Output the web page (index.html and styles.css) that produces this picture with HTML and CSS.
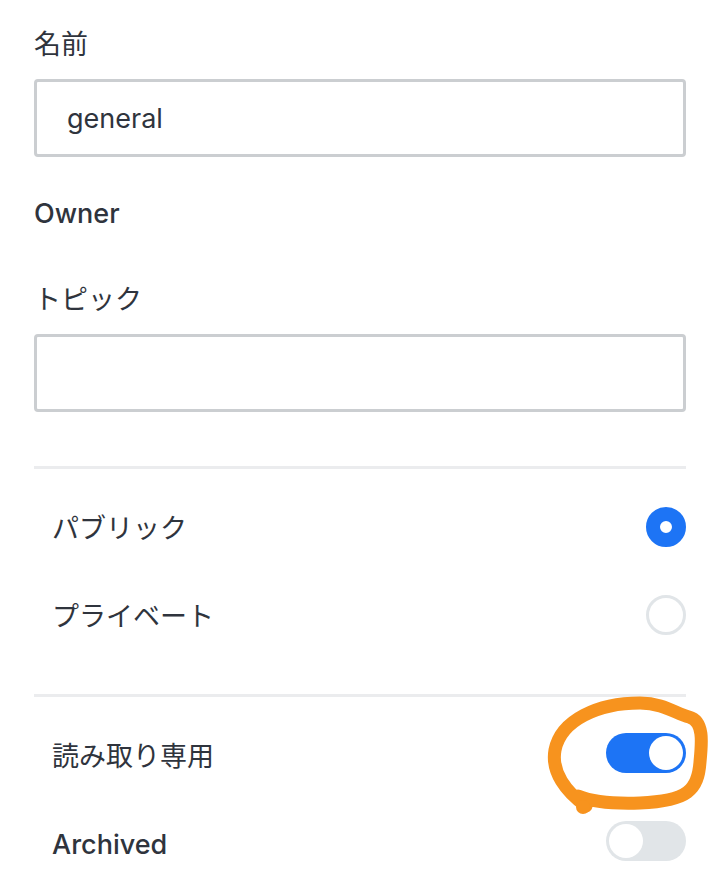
FILE: index.html
```html
<!DOCTYPE html>
<html lang="ja">
<head>
  <meta charset="UTF-8">
  <title>チャンネル設定</title>
  <link rel="stylesheet" href="styles.css">
</head>
<body>
  <main class="form">
    <label class="label" for="name">名前</label>
    <input class="input" id="name" type="text" value="general">

    <div class="label owner">Owner</div>

    <label class="label topic" for="topic">トピック</label>
    <input class="input" id="topic" type="text" value="">

    <div class="divider first"></div>

    <div class="row">
      <span class="row-text">パブリック</span>
      <span class="radio checked"></span>
    </div>
    <div class="row">
      <span class="row-text">プライベート</span>
      <span class="radio"></span>
    </div>

    <div class="divider second"></div>

    <div class="row">
      <span class="row-text">読み取り専用</span>
      <span class="switch on"><span class="knob"></span></span>
    </div>
    <div class="row">
      <span class="row-text latin">Archived</span>
      <span class="switch"><span class="knob"></span></span>
    </div>
  </main>

  <!-- hand-drawn highlight over the read-only switch -->
  <svg class="scribble" width="720" height="890" viewBox="0 0 720 890">
    <path d="M586 806 C566 792 551 772 555 750 C561 720 598 703 640 703 C664 703 676 714 689 717 C704 721 702 742 700 762 C698 790 688 801 640 803 C612 804 590 801 578 796"
          fill="none" stroke="#f7931e" stroke-width="13" stroke-linecap="round" stroke-linejoin="round"/>
    <circle cx="583" cy="807" r="7" fill="#f7931e"/>
  </svg>
</body>
</html>
```

FILE: styles.css
```css
body {
  margin: 0;
  background: #fff;
  font-family: Inter, "Noto Sans CJK JP", sans-serif;
  color: #2f343d;
}
.form {
  padding: 27px 34px 0;
  display: flex;
  flex-direction: column;
}
.label {
  display: block;
  font-size: 27px;
  line-height: 36px;
  margin-bottom: 16px;
}
.owner {
  font-size: 27px;
  font-weight: 500;
  margin-top: 39px;
  margin-bottom: 0;
}
.topic {
  margin-top: 50px;
}
.input {
  box-sizing: border-box;
  width: 100%;
  height: 78px;
  margin: 0;
  padding: 0 30px;
  border: 3px solid #cbced1;
  border-radius: 4px;
  font-family: Inter, "Noto Sans CJK JP", sans-serif;
  font-size: 27px;
  color: #2f343d;
  outline: none;
}
.divider {
  height: 3px;
  background: #ebecee;
}
.divider.first {
  margin-top: 54px;
  margin-bottom: 14px;
}
.divider.second {
  margin-top: 35px;
  margin-bottom: 14px;
}
.row {
  height: 88px;
  display: flex;
  align-items: center;
  justify-content: space-between;
  padding-left: 18px;
}
.row-text {
  font-size: 27px;
  line-height: 36px;
  padding-top: 4px;
}
.row-text.latin {
  font-size: 27px;
  font-weight: 500;
}
.radio {
  box-sizing: border-box;
  width: 40px;
  height: 40px;
  border-radius: 50%;
  border: 3px solid #e1e5e8;
  background: #fff;
}
.radio.checked {
  border: 14px solid #1d74f5;
}
.switch {
  box-sizing: border-box;
  width: 80px;
  height: 40px;
  border-radius: 20px;
  background: #e1e5e8;
  padding: 3px;
  display: flex;
  justify-content: flex-start;
  margin-top: -4px;
}
.switch.on {
  background: #1d74f5;
  justify-content: flex-end;
}
.knob {
  width: 34px;
  height: 34px;
  border-radius: 50%;
  background: #fff;
}
.scribble {
  position: absolute;
  top: 0;
  left: 0;
  pointer-events: none;
}
```
